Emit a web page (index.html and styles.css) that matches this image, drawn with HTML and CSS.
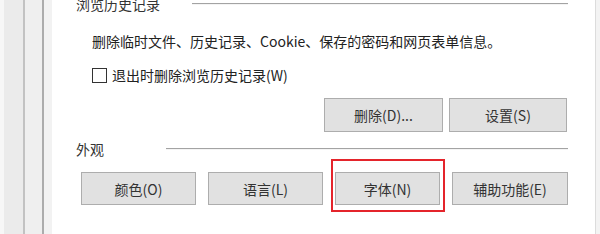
FILE: index.html
```html
<!DOCTYPE html>
<html lang="zh-CN">
  <head>
    <meta charset="UTF-8" />
    <meta name="viewport" content="width=device-width, initial-scale=1.0" />
    <title>Internet 选项</title>
    <link rel="stylesheet" href="styles.css">
  </head>
  <body>
    <div class="dialog">
      <div class="side-left"></div>

      <div class="panel">
        <!-- 浏览历史记录 -->
        <div class="group-title first">
          <span>浏览历史记录</span>
          <span class="rule rule-history"></span>
        </div>
        <p class="desc">删除临时文件、历史记录、Cookie、保存的密码和网页表单信息。</p>
        <label class="check-row">
          <span class="checkbox"></span>
          <span>退出时删除浏览历史记录(W)</span>
        </label>
        <div class="button-row right">
          <button class="btn btn-delete">删除(D)...</button>
          <button class="btn btn-settings">设置(S)</button>
        </div>

        <!-- 外观 -->
        <div class="group-title">
          <span>外观</span>
          <span class="rule rule-look"></span>
        </div>
        <div class="button-row look">
          <button class="btn btn-color">颜色(O)</button>
          <button class="btn btn-lang">语言(L)</button>
          <span class="highlight">
            <button class="btn btn-font">字体(N)</button>
          </span>
          <button class="btn btn-access">辅助功能(E)</button>
        </div>
      </div>

      <div class="side-right"></div>
    </div>
  </body>
</html>
```

FILE: styles.css
```css
body {
  margin: 0;
  width: 600px;
  height: 234px;
  overflow: hidden;
  font-family: "Noto Sans CJK SC", "Microsoft YaHei", sans-serif;
  font-size: 14px;
  color: #222;
  background: #ffffff;
}

.dialog {
  display: flex;
  height: 234px;
}

.side-left {
  width: 52px;
  flex-shrink: 0;
  background: linear-gradient(
    to right,
    #f7f7f7 0 4px,
    #ebebeb 4px 23px,
    #c2c2c2 23px 25px,
    #efefef 25px 42px,
    #acacac 42px 44px,
    #f2f2f2 44px 52px
  );
}

.side-right {
  width: 4px;
  flex-shrink: 0;
  border-left: 1px solid #dcdcdc;
  background: #f3f3f3;
}

.panel {
  flex: 1;
  padding: 0 27px 0 24px;
}

/* Titel grup dengan garis */
.group-title {
  display: flex;
  align-items: center;
  height: 20px;
  line-height: 20px;
  margin-top: 7px;
  color: #333;
}

.group-title.first {
  margin-top: -6px;
}

.rule {
  flex: 1;
  height: 0;
  border-top: 1px solid #a3a3a3;
  border-bottom: 1px solid #f4f4f4;
}

.rule-history {
  margin-left: 32px;
}

.rule-look {
  margin-left: 62px;
}

.desc {
  margin: 17px 0 0 16px;
  line-height: 20px;
}

.check-row {
  display: flex;
  align-items: center;
  height: 20px;
  margin: 14px 0 0 16px;
}

.checkbox {
  width: 13px;
  height: 13px;
  border: 1px solid #333;
  background: #fff;
  margin-right: 5px;
}

.button-row {
  display: flex;
  margin-top: 13px;
}

.button-row.right {
  justify-content: flex-end;
  gap: 6px;
  margin-right: 1px;
}

.button-row.look {
  gap: 12px;
  margin-left: 5px;
}

.btn {
  height: 34px;
  padding: 0;
  border: 1px solid #adadad;
  background: #e1e1e1;
  color: #333;
  font-family: inherit;
  font-size: 14px;
}

.btn-delete {
  width: 119px;
}

.btn-settings {
  width: 118px;
}

.look .btn {
  height: 33px;
}

.btn-color,
.btn-lang {
  width: 115px;
}

.btn-font {
  width: 105px;
}

.btn-access {
  width: 116px;
}

/* Kotak merah penanda */
.highlight {
  position: relative;
  display: flex;
}

.highlight::after {
  content: "";
  position: absolute;
  top: -13px;
  left: -4px;
  right: -5px;
  bottom: -7px;
  border: 2px solid #e4242b;
}
```
